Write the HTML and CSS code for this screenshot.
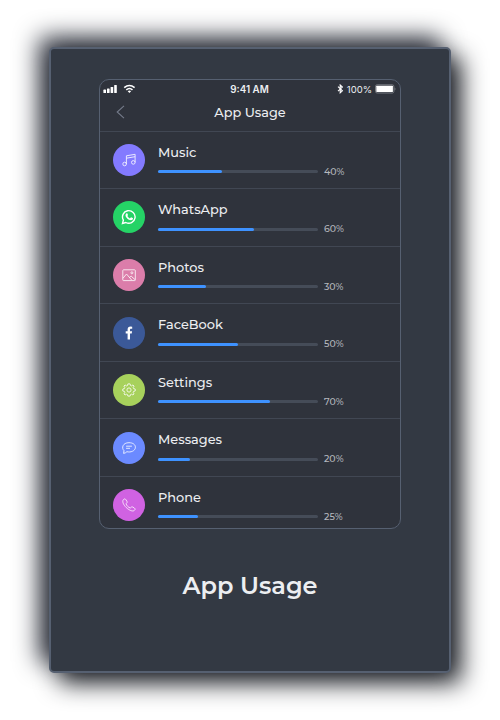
FILE: index.html
```html
<!DOCTYPE html>
<html lang="en">
<head>
<meta charset="utf-8">
<title>App Usage</title>
<link rel="stylesheet" href="styles.css">
</head>
<body>
<main class="card">
  <section class="phone">
    <div class="status">
      <svg class="signal" width="34" height="10" viewBox="0 0 34 10" fill="#fff"><rect x=".4" y="5.6" width="2.6" height="3.4" rx=".6"/><rect x="4" y="4.4" width="2.6" height="4.6" rx=".6"/><rect x="7.6" y="2.9" width="2.6" height="6.1" rx=".6"/><rect x="11.2" y="1" width="2.6" height="8" rx=".6"/><path d="M21.2 3.6Q26.4 -.6 31.6 3.6M23.3 5.8Q26.4 3.2 29.5 5.8" fill="none" stroke="#fff" stroke-width="1.6"/><path d="M24.7 7.2Q26.4 6 28.1 7.2L26.4 8.9Z"/></svg>
      <span class="time">9:41 AM</span>
      <span class="power">
        <svg width="7" height="10" viewBox="0 0 7 10"><path d="M1 2.7L5.4 6.8L3.2 8.8V1L5.4 3.1L1 7.2" fill="none" stroke="#fff" stroke-width="1.1"/></svg>
        <span class="charge">100%</span>
        <svg width="21" height="10" viewBox="0 0 21 10"><rect x=".5" y=".8" width="18.4" height="8.2" rx="1.6" fill="#2f333c" stroke="#777a80"/><rect x="1.3" y="1.7" width="16.6" height="6.4" rx=".6" fill="#fff"/><path d="M19.7 3.5Q21.2 5 19.7 6.4Z" fill="#858990"/></svg>
      </span>
    </div>
    <header class="bar">
      <svg class="back" width="9" height="14" viewBox="0 0 9 14"><path d="M8 .8L1.2 7L8 13.2" fill="none" stroke="#747b8a" stroke-width="1.1"/></svg>
      <h2>App Usage</h2>
    </header>
    <ul class="list">
      <li class="row">
        <span class="icon music"><svg viewBox="0 0 16 16"><circle cx="3.6" cy="12" r="1.8"/><circle cx="12.3" cy="10.4" r="1.8"/><path d="M5.4 12V3.8L14.1 2.3V10.4M5.4 6.2L14.1 4.7"/></svg></span>
        <div class="usage"><span class="name">Music</span><div class="line"><div class="track"><div class="fill" style="width:40%"></div></div><span class="pct">40%</span></div></div>
      </li>
      <li class="row">
        <span class="icon whatsapp"><svg viewBox="0 0 16 16"><path d="M1.5 14.4L2.4 11.2A6.3 6.3 0 1 1 4.8 13.5Z" stroke-width="1.4"/><path d="M5.3 4.5C5.7 4.1 6.2 4.2 6.4 4.6L7 6C7.1 6.4 6.6 6.8 6.4 7.1C7 8.3 7.8 9 8.9 9.4L9.8 8.4C10 8.2 10.3 8.3 10.5 8.4L11.8 9C12.2 9.3 12 10.3 11.4 10.8C9.9 12.1 6.6 10.4 5.2 8.2C4.2 6.8 4.3 5.4 5.3 4.5Z" fill="#fff" stroke="none"/></svg></span>
        <div class="usage"><span class="name">WhatsApp</span><div class="line"><div class="track"><div class="fill" style="width:60%"></div></div><span class="pct">60%</span></div></div>
      </li>
      <li class="row">
        <span class="icon photos"><svg viewBox="0 0 16 16"><rect x="1.8" y="2.8" width="12.5" height="10.8" rx=".7"/><circle cx="10.9" cy="5.8" r="1"/><path d="M2 11.2L5.5 7L10.8 13.2M8.5 10.4L10.2 9.2L14.1 12.7"/></svg></span>
        <div class="usage"><span class="name">Photos</span><div class="line"><div class="track"><div class="fill" style="width:30%"></div></div><span class="pct">30%</span></div></div>
      </li>
      <li class="row">
        <span class="icon facebook"><svg viewBox="0 0 16 16"><path d="M6.6 14.4V8.6H4.7V6.2H6.6V4.5C6.6 2.6 7.7 1.5 9.5 1.5L11.2 1.7V3.7H10.2C9.2 3.7 9 4.2 9 4.9V6.2H11.1L10.7 8.6H9V14.4Z" fill="#fff" stroke="none"/></svg></span>
        <div class="usage"><span class="name">FaceBook</span><div class="line"><div class="track"><div class="fill" style="width:50%"></div></div><span class="pct">50%</span></div></div>
      </li>
      <li class="row">
        <span class="icon settings"><svg viewBox="0 0 16 16"><circle cx="8" cy="8" r="2.1"/><path d="M6.9 1.9H9.1L9.5 3.5L10.5 3.9L11.9 3L13.1 4.1L12.2 5.6L12.6 6.6L14.2 7V9L12.6 9.4L12.2 10.4L13 11.9L11.9 13L10.5 12.2L9.5 12.6L9.1 14.1H6.9L6.5 12.6L5.5 12.2L4.1 13L3 11.9L3.8 10.4L3.4 9.4L1.8 9V7L3.4 6.6L3.8 5.6L2.9 4.1L4.1 3L5.5 3.9L6.5 3.5Z" stroke-linejoin="round"/></svg></span>
        <div class="usage"><span class="name">Settings</span><div class="line"><div class="track"><div class="fill" style="width:70%"></div></div><span class="pct">70%</span></div></div>
      </li>
      <li class="row">
        <span class="icon messages"><svg viewBox="0 0 16 16"><path d="M2.6 13.4L3 10.7C.3 8 1.6 2.7 8 2.7C12 2.7 14.4 4.7 14.4 7.2C14.4 11 9.5 12.7 5.9 11.7C5 12.7 3.8 13.2 2.6 13.4Z"/><path d="M5.1 6.2H10.9M5.1 8.3H9"/></svg></span>
        <div class="usage"><span class="name">Messages</span><div class="line"><div class="track"><div class="fill" style="width:20%"></div></div><span class="pct">20%</span></div></div>
      </li>
      <li class="row">
        <span class="icon call"><svg viewBox="0 0 16 16"><path d="M2.3 2.8C3.2 1.6 4.2 1.6 4.9 2.7L6.1 4.7C6.6 5.7 5 6.1 5.1 6.9C5.4 8.4 7.6 10.7 9.2 10.9C10 11 10.4 9.4 11.4 9.9L13.4 11.1C14.5 11.9 14.2 12.7 13.2 13.5C11.6 14.8 8 13.2 5.2 10.5C2.4 7.8 1 4.5 2.3 2.8Z"/></svg></span>
        <div class="usage"><span class="name">Phone</span><div class="line"><div class="track"><div class="fill" style="width:25%"></div></div><span class="pct">25%</span></div></div>
      </li>
    </ul>
  </section>
  <h1>App Usage</h1>
</main>
</body>
</html>
```
FILE: styles.css
```css
* { box-sizing: border-box; }
body {
  margin: 0;
  height: 720px;
  padding: 47px 49px;
  background: #fff;
  color: #eceef1;
  font-family: Montserrat, Inter, sans-serif;
  overflow: hidden;
}
.card {
  width: 402px;
  height: 626px;
  padding-top: 30px;
  border: 2px solid #566071;
  border-radius: 5px;
  background: #333943;
  box-shadow: 10px 10px 25px #1b1e24, -10px -10px 25px #30343f;
  display: flex;
  flex-direction: column;
  align-items: center;
}
.phone {
  width: 302px;
  height: 450px;
  flex: none;
  border: 1px solid #566071;
  border-radius: 10px;
  background: #2f333c;
  overflow: hidden;
}
.status {
  height: 18px;
  padding: 0 4px 0 3px;
  display: grid;
  grid-template-columns: 1fr auto 1fr;
  align-items: center;
  font-family: Inter, "Liberation Sans", sans-serif;
}
.status svg { display: block; }
.time { font-size: 9.8px; font-weight: 600; line-height: 12px; padding-top: 1px; }
.power { display: flex; align-items: center; justify-content: flex-end; gap: 3px; }
.charge { font-size: 9.5px; line-height: 12px; padding-top: 1px; }
.bar {
  height: 33.6px;
  padding: 0 16px;
  border-bottom: 1px solid #414753;
  display: grid;
  grid-template-columns: 1fr auto 1fr;
  align-items: center;
}
h2 { margin: -3px 0 0; font-size: 12.85px; font-weight: 500; line-height: 18px; }
.back { margin-top: -4px; }
.list { margin: 0; padding: 0; list-style: none; }
.row {
  height: 57.55px;
  padding: 0 13px;
  border-bottom: 1px solid #414753;
  display: flex;
  align-items: center;
  gap: 13px;
}
.icon {
  width: 32px;
  height: 32px;
  flex: none;
  border-radius: 50%;
  display: grid;
  place-items: center;
}
.icon svg { width: 16px; height: 16px; fill: none; stroke: #fff; stroke-width: .9; }
.icon.music svg, .icon.photos svg, .icon.settings svg, .icon.messages svg, .icon.call svg { opacity: .9; }
.music { background: #837aff; }
.whatsapp { background: #25d366; }
.photos { background: #db7daa; }
.facebook { background: #3b5998; }
.settings { background: #a7d15c; }
.messages { background: #6b8aff; }
.call { background: #d062e2; }
.usage { display: flex; flex-direction: column; gap: 4px; padding-top: .6px; }
.name { font-size: 12.9px; font-weight: 500; line-height: 18px; padding-top: 1px; }
.line { display: flex; align-items: center; gap: 6px; height: 12px; }
.track { width: 160px; height: 3px; border-radius: 2px; background: #454c58; }
.fill { height: 100%; border-radius: 2px; background: #3e92ff; }
.pct { color: #b5b8be; font-size: 9.4px; font-weight: 500; line-height: 12px; }
h1 { margin: 41px 0 0; font-size: 24px; line-height: 32px; font-weight: 600; }
```
